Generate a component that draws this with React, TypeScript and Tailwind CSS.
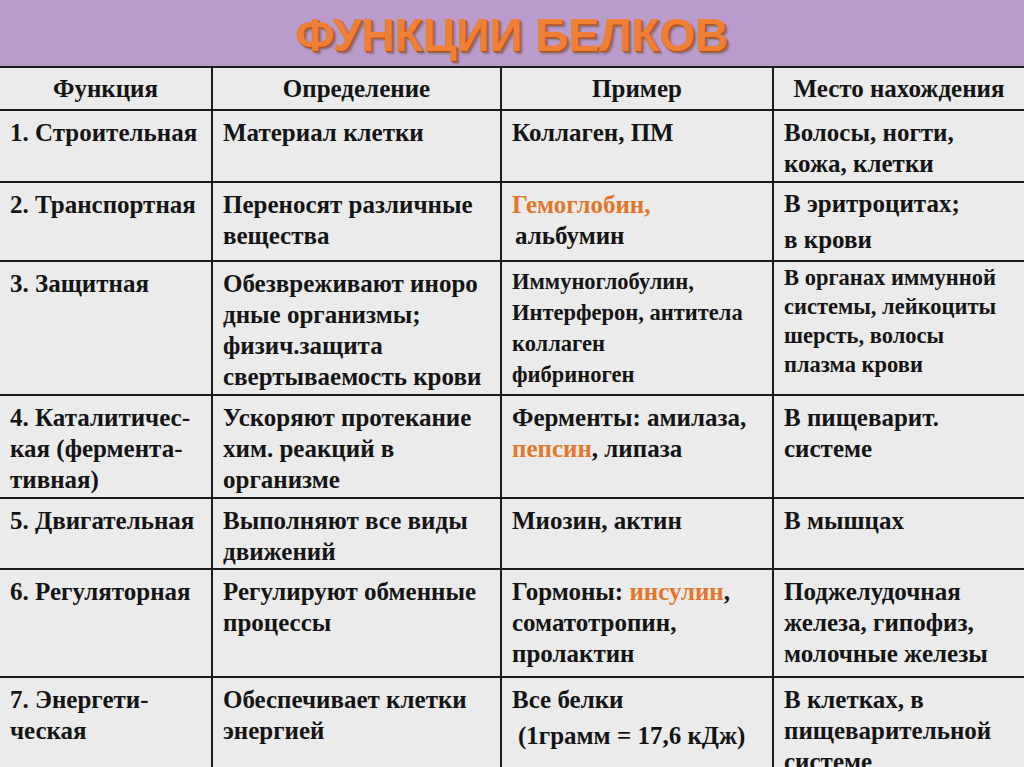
const orange = "text-[#e2772c]"

type Row = {
  h: string
  cells: React.ReactNode[]
}

const Cell = ({ children, className = "" }: { children: React.ReactNode; className?: string }) => (
  <div className={`bg-[#ebebeb] pl-[10px] pt-[6px] overflow-hidden ${className}`}>{children}</div>
)

const rows: Row[] = [
  {
    h: "h-[70px]",
    cells: [
      <p>1. Строительная</p>,
      <p>Материал клетки</p>,
      <p>Коллаген, ПМ</p>,
      <p>
        Волосы, ногти,
        <br />
        кожа, клетки
      </p>,
    ],
  },
  {
    h: "h-[77px]",
    cells: [
      <p>2. Транспортная</p>,
      <p>
        Переносят различные
        <br />
        вещества
      </p>,
      <p>
        <span className={orange}>Гемоглобин,</span>
        <br />
        <span className="pl-[3px]">альбумин</span>
      </p>,
      <p className="leading-[36px] -mt-[3px]">
        В эритроцитах;
        <br />
        в крови
      </p>,
    ],
  },
  {
    h: "h-[132px]",
    cells: [
      <p>3. Защитная</p>,
      <p>
        Обезвреживают иноро
        <br />
        дные организмы;
        <br />
        физич.защита
        <br />
        свертываемость крови
      </p>,
      <p className="text-[22.5px] leading-[31px] -mt-[2px]">
        Иммуноглобулин,
        <br />
        Интерферон, антитела
        <br />
        коллаген
        <br />
        фибриноген
      </p>,
      <p className="text-[22.5px] leading-[29px] -mt-[5px]">
        В органах иммунной
        <br />
        системы, лейкоциты
        <br />
        шерсть, волосы
        <br />
        плазма крови
      </p>,
    ],
  },
  {
    h: "h-[101px]",
    cells: [
      <p>
        4. Каталитичес-
        <br />
        кая (фермента-
        <br />
        тивная)
      </p>,
      <p>
        Ускоряют протекание
        <br />
        хим. реакций в
        <br />
        организме
      </p>,
      <p>
        Ферменты: амилаза,
        <br />
        <span className={orange}>пепсин</span>, липаза
      </p>,
      <p>
        В пищеварит.
        <br />
        системе
      </p>,
    ],
  },
  {
    h: "h-[69px]",
    cells: [
      <p>5. Двигательная</p>,
      <p>
        Выполняют все виды
        <br />
        движений
      </p>,
      <p>Миозин, актин</p>,
      <p>В мышцах</p>,
    ],
  },
  {
    h: "h-[106px]",
    cells: [
      <p>6. Регуляторная</p>,
      <p>
        Регулируют обменные
        <br />
        процессы
      </p>,
      <p>
        Гормоны: <span className={orange}>инсулин</span>,
        <br />
        соматотропин,
        <br />
        пролактин
      </p>,
      <p>
        Поджелудочная
        <br />
        железа, гипофиз,
        <br />
        молочные железы
      </p>,
    ],
  },
  {
    h: "h-[100px]",
    cells: [
      <p>
        7. Энергети-
        <br />
        ческая
      </p>,
      <p>
        Обеспечивает клетки
        <br />
        энергией
      </p>,
      <p>
        Все белки
        <br />
        <span className="inline-block pl-[6px] pt-[5px]">(1грамм = 17,6 кДж)</span>
      </p>,
      <p>
        В клетках, в
        <br />
        пищеварительной
        <br />
        системе
      </p>,
    ],
  },
]

export default function App() {
  return (
    <div className="w-[1024px] h-[767px] overflow-hidden bg-[#ebebeb] font-['Liberation_Serif',serif] font-bold text-[#141414]">
      {/* title band */}
      <div className="h-[66px] bg-[#b99ccb] flex items-center justify-center">
        <h1 className="font-['Liberation_Sans',Arial,sans-serif] font-bold text-[46px] leading-none text-[#f07e34] [text-shadow:1px_1px_0_#b0501a,2px_2px_0_#9a6a5a,3px_3px_2px_#8a7a90] pt-[4px]">
          ФУНКЦИИ БЕЛКОВ
        </h1>
      </div>

      {/* table */}
      <div className="grid grid-cols-[211px_287px_270px_1fr] gap-[2px] bg-[#1c1c1c] pt-[2px] text-[25px] leading-[31px]">
        {["Функция", "Определение", "Пример", "Место нахождения"].map((t) => (
          <div key={t} className="bg-[#ebebeb] h-[41px] flex items-center justify-center">
            {t}
          </div>
        ))}
        {rows.map((r, i) =>
          r.cells.map((c, j) => (
            <Cell key={`${i}-${j}`} className={r.h}>
              {c}
            </Cell>
          ))
        )}
      </div>
    </div>
  )
}
